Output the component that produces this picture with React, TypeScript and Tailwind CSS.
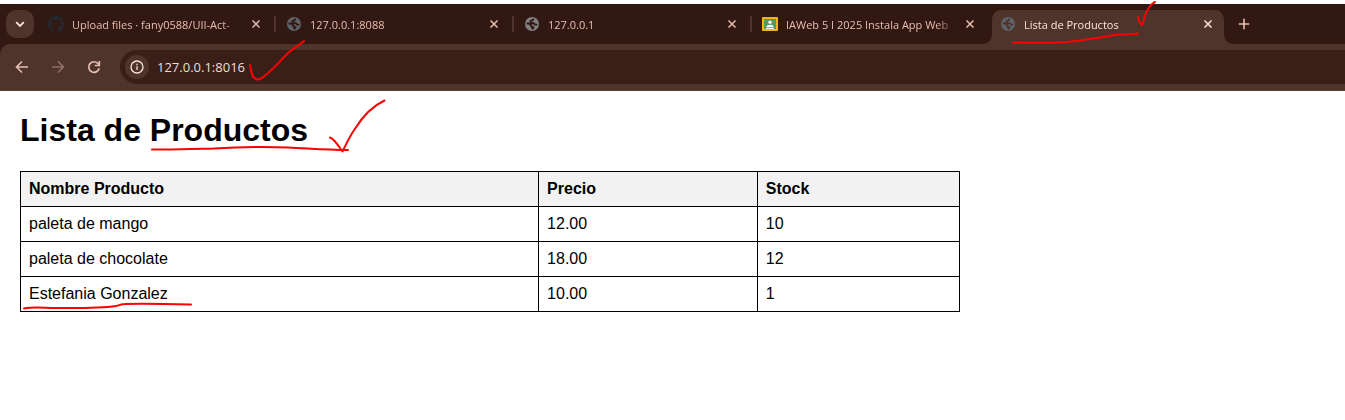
import React from "react";

type IconKind = "github" | "globe" | "classroom";

interface TabInfo {
  title: string;
  icon: IconKind;
  iconClass: string;
  active?: boolean;
  divider?: boolean;
}

const tabs: TabInfo[] = [
  { title: "Upload files · fany0588/UII-Act-", icon: "github", iconClass: "text-[#24292f]", divider: true },
  { title: "127.0.0.1:8088", icon: "globe", iconClass: "text-[#5f6368] stroke-[#321812]", divider: true },
  { title: "127.0.0.1", icon: "globe", iconClass: "text-[#80807f] stroke-[#321812]", divider: true },
  { title: "IAWeb 5 I 2025 Instala App Web", icon: "classroom", iconClass: "" },
  { title: "Lista de Productos", icon: "globe", iconClass: "text-[#5f6368] stroke-[#4f342c]", active: true },
];

const products = [
  { name: "paleta de mango", price: "12.00", stock: 10 },
  { name: "paleta de chocolate", price: "18.00", stock: 12 },
  { name: "Estefania Gonzalez", price: "10.00", stock: 1 },
];

function Favicon({ kind, className }: { kind: IconKind; className: string }) {
  if (kind === "github") {
    return (
      <svg viewBox="0 0 16 16" className={`size-4 shrink-0 ${className}`} fill="currentColor" aria-hidden="true">
        <path d="M8 0C3.58 0 0 3.58 0 8c0 3.54 2.29 6.53 5.47 7.59.4.07.55-.17.55-.38 0-.19-.01-.82-.01-1.49-2.01.37-2.53-.49-2.69-.94-.09-.23-.48-.94-.82-1.13-.28-.15-.68-.52-.01-.53.63-.01 1.08.58 1.23.82.72 1.21 1.87.87 2.33.66.07-.52.28-.87.51-1.07-1.78-.2-3.64-.89-3.64-3.95 0-.87.31-1.59.82-2.15-.08-.2-.36-1.02.08-2.12 0 0 .67-.21 2.2.82.64-.18 1.32-.27 2-.27s1.36.09 2 .27c1.53-1.04 2.2-.82 2.2-.82.44 1.1.16 1.92.08 2.12.51.56.82 1.27.82 2.15 0 3.07-1.87 3.75-3.65 3.95.29.25.54.73.54 1.48 0 1.07-.01 1.93-.01 2.2 0 .21.15.46.55.38A8.01 8.01 0 0 0 16 8c0-4.42-3.58-8-8-8Z" />
      </svg>
    );
  }
  if (kind === "classroom") {
    return (
      <svg viewBox="0 0 16 16" className="size-4 shrink-0" aria-hidden="true">
        <rect x="0" y="1" width="16" height="14" rx="1" fill="#f5b90c" />
        <rect x="2" y="3" width="12" height="10" fill="#4c9f5b" />
        <circle cx="8" cy="6.2" r="1.6" fill="#fff" />
        <path d="M4.3 11.2c0-1.7 1.8-2.5 3.7-2.5s3.7.8 3.7 2.5Z" fill="#fff" />
        <rect x="4" y="12" width="8" height="1" fill="#e8efe4" />
      </svg>
    );
  }
  return (
    <svg viewBox="0 0 16 16" className={`size-4 shrink-0 ${className}`} fill="none" strokeWidth="1.9" aria-hidden="true">
      <circle cx="8" cy="8" r="7" fill="currentColor" stroke="none" />
      <path
        strokeLinejoin="round"
        d="M9.500 2.800 8.600 4.300 6.600 5v2.200h3.200l1.300 1.400h2.300M2.600 7.500h2.500l2.400 2.200v1.200L9.600 11.200 8 13.400"
      />
    </svg>
  );
}

function CloseIcon() {
  return (
    <svg viewBox="0 0 16 16" className="size-4" fill="none" stroke="currentColor" strokeWidth="1.5" aria-hidden="true">
      <path d="m4.500 4.500 7 7m0-7-7 7" />
    </svg>
  );
}

function Tab({ tab }: { tab: TabInfo }) {
  return (
    <div role="tab" aria-selected={!!tab.active} className="relative flex w-[238px] min-w-0 items-end">
      {tab.active && (
        <svg
          viewBox="0 0 252 34"
          className="absolute bottom-0 -left-2 h-[34px] w-[252px] text-[#4f342c]"
          fill="currentColor"
          aria-hidden="true"
        >
          <path d="M0 34c6 0 10-4 10-10V10C10 4 14 0 20 0h212c6 0 10 4 10 10v14c0 6 4 10 10 10Z" />
        </svg>
      )}
      <div className="relative flex h-10 w-full min-w-0 items-center pl-2.5">
        <Favicon kind={tab.icon} className={tab.iconClass} />
        <span
          className={`ml-2 min-w-0 flex-1 overflow-hidden whitespace-nowrap pt-px text-[11px] leading-4 [mask-image:linear-gradient(to_right,#000_calc(100%-20px),transparent)] ${
            tab.active ? "text-[#fbe4de]" : "text-[#e7bdb2]"
          }`}
        >
          {tab.title}
        </span>
        <button
          type="button"
          aria-label="Cerrar pestaña"
          className={`mr-3 ml-1.5 flex size-4 items-center justify-center ${tab.active ? "text-[#fbe4de]" : "text-[#e7bdb2]"}`}
        >
          <CloseIcon />
        </button>
        {tab.divider && <span className="absolute right-0 h-4 w-0.5 bg-[#4f342c]" />}
      </div>
    </div>
  );
}

function TabStrip() {
  return (
    <div className="flex h-10 items-stretch bg-[#321812]">
      <button
        type="button"
        aria-label="Buscar pestañas"
        className="mt-1.5 mr-1 ml-1.5 flex size-7 shrink-0 items-center justify-center rounded-[10px] bg-[#4f342c] text-[#fbe4de]"
      >
        <svg viewBox="0 0 16 16" className="size-4" fill="none" stroke="currentColor" strokeWidth="1.8" aria-hidden="true">
          <path d="m4.200 6.200 3.800 3.800 3.800-3.800" />
        </svg>
      </button>
      <div role="tablist" className="flex min-w-0">
        {tabs.map((tab) => (
          <Tab key={tab.title} tab={tab} />
        ))}
      </div>
      <button type="button" aria-label="Nueva pestaña" className="ml-2 flex w-4 shrink-0 items-center justify-center text-[#e7bdb2]">
        <svg viewBox="0 0 16 16" className="size-4" fill="none" stroke="currentColor" strokeWidth="1.6" aria-hidden="true">
          <path d="M8 2.800v10.400M2.800 8h10.400" />
        </svg>
      </button>
    </div>
  );
}

function Toolbar() {
  return (
    <div className="bg-[#321812]">
      <div className="flex h-[47px] items-center rounded-tl-[10px] border-b border-[#5a4038] bg-[#4f342c] pl-3.5 text-[#e7bdb2]">
        <button type="button" aria-label="Atrás" className="size-4">
          <svg viewBox="0 0 16 16" className="size-4" fill="none" stroke="currentColor" strokeWidth="1.6" aria-hidden="true">
            <path d="M14 8H3M8 2.500 2.500 8 8 13.500" />
          </svg>
        </button>
        <button type="button" aria-label="Adelante" className="ml-5 size-4 text-[#8f6f66]">
          <svg viewBox="0 0 16 16" className="size-4" fill="none" stroke="currentColor" strokeWidth="1.6" aria-hidden="true">
            <path d="M2 8h11M8 2.500 13.500 8 8 13.500" />
          </svg>
        </button>
        <button type="button" aria-label="Volver a cargar" className="ml-5 size-4">
          <svg viewBox="0 0 16 16" className="size-4" fill="none" stroke="currentColor" strokeWidth="1.7" aria-hidden="true">
            <path d="M13.200 9.300A5.300 5.300 0 1 1 12.300 4.900L13 5.800" />
            <path d="M13.300 2v4.500H8.800" />
          </svg>
        </button>
        <form className="ml-[18px] flex h-[34px] min-w-0 flex-1 items-center rounded-l-full bg-[#3a1f19] pl-[5px]">
          <button
            type="button"
            aria-label="Ver información del sitio"
            className="flex size-6 shrink-0 items-center justify-center rounded-full bg-[#4f342c] text-[#fbe4de]"
          >
            <svg viewBox="0 0 16 16" className="size-4" fill="none" stroke="currentColor" strokeWidth="1.3" aria-hidden="true">
              <circle cx="8" cy="8" r="6" />
              <path d="M8 7.200v3.900M8 4.700v1.500" />
            </svg>
          </button>
          <input
            aria-label="Barra de direcciones"
            defaultValue="127.0.0.1:8016"
            className="ml-2 block min-w-0 flex-1 bg-transparent text-[13px] leading-5 text-[#f3ddd7] outline-none"
          />
        </form>
      </div>
    </div>
  );
}

function ProductPage() {
  const cell = "border border-black p-2 text-left leading-[18px]";
  return (
    <main className="px-5 pt-[21px] pb-5 font-['Liberation_Sans',Arial,sans-serif] text-base text-black">
      <h1 className="mb-[22px] text-[32px] leading-[37px] font-bold">Lista de Productos</h1>
      <table className="w-[72%] table-fixed border-collapse">
        <thead className="bg-[#f2f2f2]">
          <tr>
            <th className={`w-[55.2%] ${cell}`}>Nombre Producto</th>
            <th className={`w-[23.3%] ${cell}`}>Precio</th>
            <th className={cell}>Stock</th>
          </tr>
        </thead>
        <tbody>
          {products.map((product) => (
            <tr key={product.name}>
              <td className={cell}>{product.name}</td>
              <td className={cell}>{product.price}</td>
              <td className={cell}>{product.stock}</td>
            </tr>
          ))}
        </tbody>
      </table>
    </main>
  );
}

/* Red pen strokes drawn freely on top of the window. */
function PenMarks() {
  return (
    <svg
      className="pointer-events-none absolute inset-0 size-full"
      fill="none"
      stroke="#fe0000"
      strokeWidth="2"
      strokeLinecap="round"
      strokeLinejoin="round"
      aria-hidden="true"
    >
      <path d="M250 65c1 6 2 13 6 14 4 2 8-3 12-6 7-6 13-13 20-20 6-5 10-7 16-12" />
      <path d="M1013 42.500c18 .5 38 .5 54-.5 18-2 32-4 48-7 8-1 15-.5 23-1.500" />
      <path d="M1138 17c1 3 1 7 4 8 2-3 2-8 4-12 3-5 4-9 9-11" />
      <path d="M152 149.500c22 .5 44-.5 62-1 25-1.500 50-2 74-1 22 1 38 2.500 60 2.500" />
      <path d="M330 137.500c5 2 8 8 12.500 14 3-6 7-15 12-22 8-13 17-23 30-29" />
      <path d="M24 308.500c10-2 20-.5 31-.5 20 0 44 .5 61-2 4-1 6-2 9-2 22-.5 44 0 66 .5" />
    </svg>
  );
}

export default function App() {
  return (
    <div className="relative min-h-screen overflow-hidden bg-white pt-1 font-['Open_Sans','Noto_Sans',sans-serif]">
      <header>
        <TabStrip />
        <Toolbar />
      </header>
      <ProductPage />
      <PenMarks />
    </div>
  );
}
